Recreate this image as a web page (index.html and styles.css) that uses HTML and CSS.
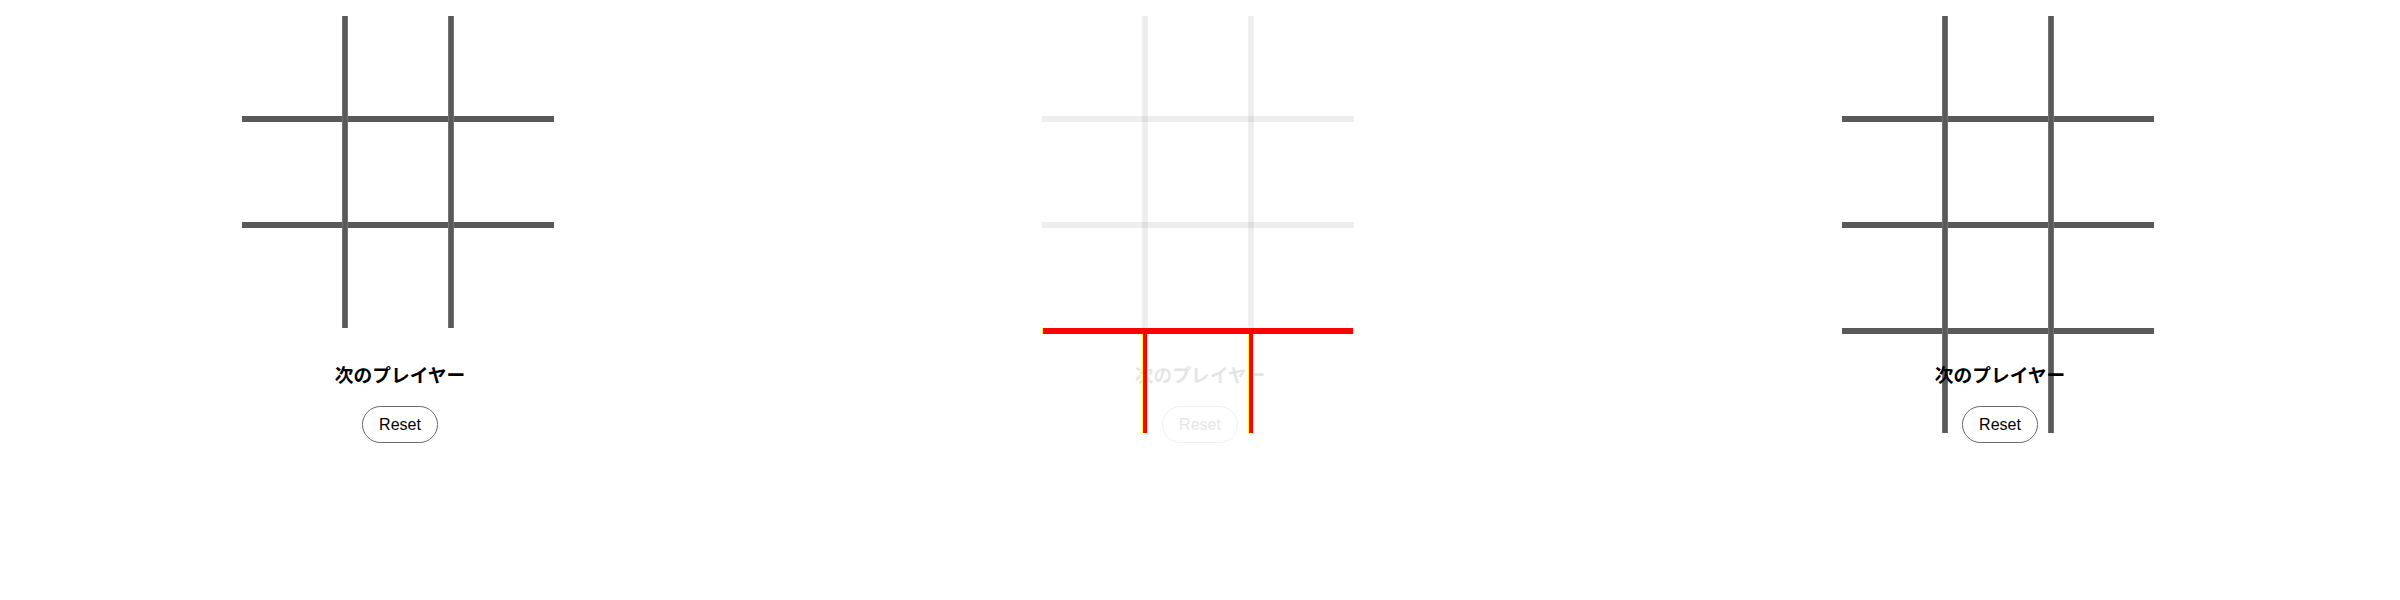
FILE: index.html
```html
<!DOCTYPE html>
<html lang="ja">
<head>
<meta charset="utf-8">
<title>Tic Tac Toe</title>
<link rel="stylesheet" href="styles.css">
</head>
<body>
<div class="app">
  <section class="panel">
    <div class="board">
      <div class="line h r2"></div>
      <div class="line h r4"></div>
      <div class="line v c2"></div>
      <div class="line v c4"></div>
    </div>
    <h3 class="status">次のプレイヤー</h3>
    <button class="reset">Reset</button>
  </section>

  <section class="panel">
    <div class="board board-ext">
      <div class="line h r2 ghost"></div>
      <div class="line h r4 ghost"></div>
      <div class="line v c2 ghost"></div>
      <div class="line v c4 ghost"></div>
      <div class="red red-h r6"></div>
      <div class="red red-v c2"></div>
      <div class="red red-v c4"></div>
    </div>
    <h3 class="status ghost">次のプレイヤー</h3>
    <button class="reset ghost">Reset</button>
  </section>

  <section class="panel">
    <div class="board board-ext">
      <div class="line h r2"></div>
      <div class="line h r4"></div>
      <div class="line h r6"></div>
      <div class="line v c2"></div>
      <div class="line v c4"></div>
    </div>
    <h3 class="status">次のプレイヤー</h3>
    <button class="reset">Reset</button>
  </section>
</div>
</body>
</html>
```

FILE: styles.css
```css
body {
  margin: 0;
  background: #ffffff;
}

.app {
  display: flex;
}

.panel {
  width: 800px;
  display: flex;
  flex-direction: column;
  align-items: center;
  padding-top: 16px;
}

.board {
  display: grid;
  grid-template-columns: 100px 6px 100px 6px 100px;
  grid-template-rows: 100px 6px 100px 6px 100px;
  margin-right: 4px;
}

.board-ext {
  grid-template-rows: 100px 6px 100px 6px 100px 6px 99px;
  margin-bottom: -105px;
}

.line {
  background: #595959;
}

.h {
  grid-column: 1 / 6;
}

.r2 { grid-row: 2; }
.r4 { grid-row: 4; }
.r6 { grid-row: 6; }

.v {
  grid-row: 1 / -1;
  box-sizing: border-box;
  border-left: 1px solid #737373;
  border-right: 1px solid #737373;
}

.c2 { grid-column: 2; }
.c4 { grid-column: 4; }

.ghost {
  opacity: 0.1;
}

.red {
  position: relative;
  z-index: 1;
  background: #ff0000;
  box-sizing: border-box;
}

.red-h {
  grid-column: 1 / 6;
  border-left: 1px solid #ffff00;
  border-right: 1px solid #ffff00;
}

.red-v {
  grid-row: 7;
  border-left: 1px solid #ffff00;
  border-right: 1px solid #ffff00;
}

.status {
  margin: 34px 0 0;
  font-family: "Noto Sans CJK JP", sans-serif;
  font-size: 18.72px;
  line-height: 24px;
  font-weight: 700;
  color: #000000;
}

.reset {
  margin-top: 20px;
  font-family: "Liberation Sans", Arial, sans-serif;
  font-size: 16px;
  line-height: 19px;
  padding: 8px 16px;
  border: 1px solid #666666;
  border-radius: 19px;
  background: #ffffff;
  color: #000000;
}
```
